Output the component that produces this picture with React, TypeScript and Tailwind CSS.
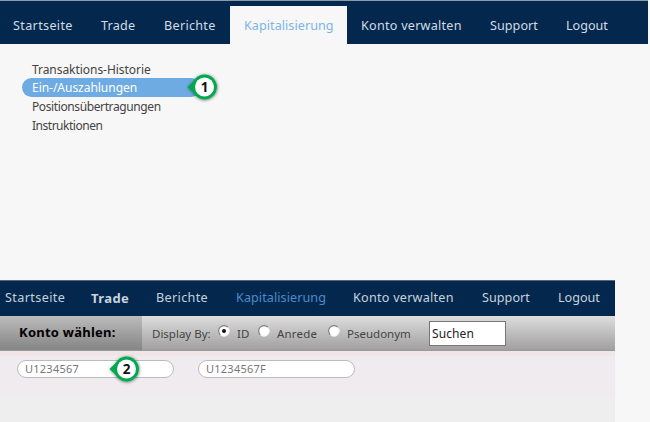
import React from "react";

function Marker({ n, place }: { n: number; place: string }) {
  return (
    <svg className={`absolute z-10 ${place}`} width="36" height="34" viewBox="0 0 36 34" role="img">
      <defs>
        <filter id={`shade${n}`} x="-20%" y="-20%" width="140%" height="140%">
          <feDropShadow dx="0.3" dy="0.5" stdDeviation="1.4" floodColor="#000" floodOpacity="0.6" />
        </filter>
      </defs>
      <g filter={`url(#shade${n})`} fill="#00a94f">
        <path d="M2.5 17 L11 9 L11 25 Z" />
        <circle cx="19.5" cy="17" r="12.4" />
      </g>
      <circle cx="19.5" cy="17" r="9.5" fill="#fff" />
      <text x="19.5" y="21.8" textAnchor="middle" fontFamily="Open Sans, sans-serif" fontWeight="700" fontSize="13.5" fill="#111">
        {n}
      </text>
    </svg>
  );
}

const topItems = [
  { label: "Startseite", cls: "w-[88px] tracking-[0.35px]" },
  { label: "Trade", cls: "w-[63px] tracking-[0.2px]" },
  { label: "Berichte", cls: "w-[66px] tracking-[0.3px]" },
  { label: "Kapitalisierung", cls: "w-[117px] pl-[14px] bg-[#f7f7f7] text-[#7db4e6] tracking-[0.05px]" },
  { label: "Konto verwalten", cls: "w-[143px] pl-[14px] tracking-[0.25px]" },
  { label: "Support", cls: "w-[76px] tracking-[0.05px]" },
  { label: "Logout", cls: "w-[60px]" },
];

const lowerItems = [
  { label: "Startseite", cls: "w-[86px] tracking-[0.4px]" },
  { label: "Trade", cls: "w-[65px] text-[13px] font-bold tracking-[0.4px]" },
  { label: "Berichte", cls: "w-[80px] tracking-[0.35px]" },
  { label: "Kapitalisierung", cls: "w-[117px] text-[#4c8bcb] tracking-[0.08px]" },
  { label: "Konto verwalten", cls: "w-[129px] tracking-[0.25px]" },
  { label: "Support", cls: "w-[76px] tracking-[0.05px]" },
  { label: "Logout", cls: "w-[50px]" },
];

function Radio({ checked }: { checked?: boolean }) {
  return (
    <svg width="12" height="12" viewBox="0 0 12 12" className="mb-[5px] shrink-0">
      <circle cx="6" cy="6" r="5.3" fill="#fff" stroke="#eee" />
      <path d="M2.2 9.8 A5.3 5.3 0 0 1 9.8 2.2" fill="none" stroke="#777" strokeWidth="1.1" />
      {checked && <circle cx="6" cy="6" r="2" fill="#111" />}
    </svg>
  );
}

export default function App() {
  return (
    <div className="flex h-[422px] w-[650px] flex-col overflow-hidden bg-[#f7f7f7] font-['Noto_Sans',sans-serif] text-[12.6px] whitespace-nowrap">
      <nav className="flex h-[44px] w-[648px] shrink-0 border-t border-[#8a9ba9] bg-[#04284d] pt-[5px] pl-[13px] text-[#d3dbe4]">
        {topItems.map((i) => (
          <div key={i.label} className={`flex h-[38px] shrink-0 items-center pt-[3px] ${i.cls}`}>{i.label}</div>
        ))}
      </nav>
      <div className="relative flex h-[236px] shrink-0 flex-col pt-[16px] pl-[22px] text-[12px] text-[#444]">
        <div className="h-[18px] pl-[10px] leading-[19px] tracking-[-0.05px]">Transaktions-Historie</div>
        <div className="h-[19px] w-[179px] rounded-full bg-[#6eabe2] pl-[10px] leading-[20px] tracking-[-0.03px] text-white">Ein-/Auszahlungen</div>
        <div className="h-[19px] pl-[10px] leading-[20px] tracking-[-0.39px]">Positionsübertragungen</div>
        <div className="h-[19px] pl-[10px] leading-[20px] tracking-[-0.48px]">Instruktionen</div>
        <Marker n={1} place="left-[185px] top-[26px]" />
      </div>
      <section className="flex h-[142px] w-[615px] shrink-0 flex-col bg-[#eee]">
        <nav className="flex h-[36px] shrink-0 items-center border-t border-[#4f6880] bg-[#04284d] pb-px pl-[5px] text-[#c8d2dd]">
          {lowerItems.map((i) => (
            <div key={i.label} className={`h-[18px] shrink-0 leading-[18px] ${i.cls}`}>{i.label}</div>
          ))}
        </nav>
        <div className="flex h-[35px] shrink-0 items-center border-b border-[#999] bg-linear-to-b from-[#dedede] to-[#a19f9f] text-[11.5px] text-[#444]">
          <div className="flex h-full w-[142px] items-center bg-linear-to-b from-[#bcbcbc] to-[#858585] pl-[19px] text-[13px] font-bold tracking-[0.25px] text-black">Konto wählen:</div>
          <div className="w-[76px] pt-px pl-[10px]">Display By:</div>
          <Radio checked />
          <span className="w-[28px] pt-px pl-[7px]">ID</span>
          <Radio />
          <span className="w-[58px] pt-px pl-[7px] tracking-[0.2px]">Anrede</span>
          <Radio />
          <span className="w-[89px] pt-px pl-[7px]">Pseudonym</span>
          <div className="h-[25px] w-[77px] border border-[#777] bg-white pl-[2px] text-[12px] leading-[24px] tracking-[0.1px] text-[#222]">Suchen</div>
        </div>
        <div className="relative flex h-[45px] shrink-0 gap-[24px] border-t-[5px] border-[#f1e5e7] bg-[#efebef] pt-[4px] pl-[17px] text-[11px] text-[#777]">
          <div className="h-[18px] w-[157px] rounded-full border border-[#bbb] bg-white pl-[7px] leading-[16px] tracking-[0.25px]">U1234567</div>
          <div className="h-[18px] w-[157px] rounded-full border border-[#bbb] bg-white pl-[7px] leading-[16px] tracking-[0.25px]">U1234567F</div>
          <Marker n={2} place="left-[107px] -top-[4px]" />
        </div>
      </section>
    </div>
  );
}
